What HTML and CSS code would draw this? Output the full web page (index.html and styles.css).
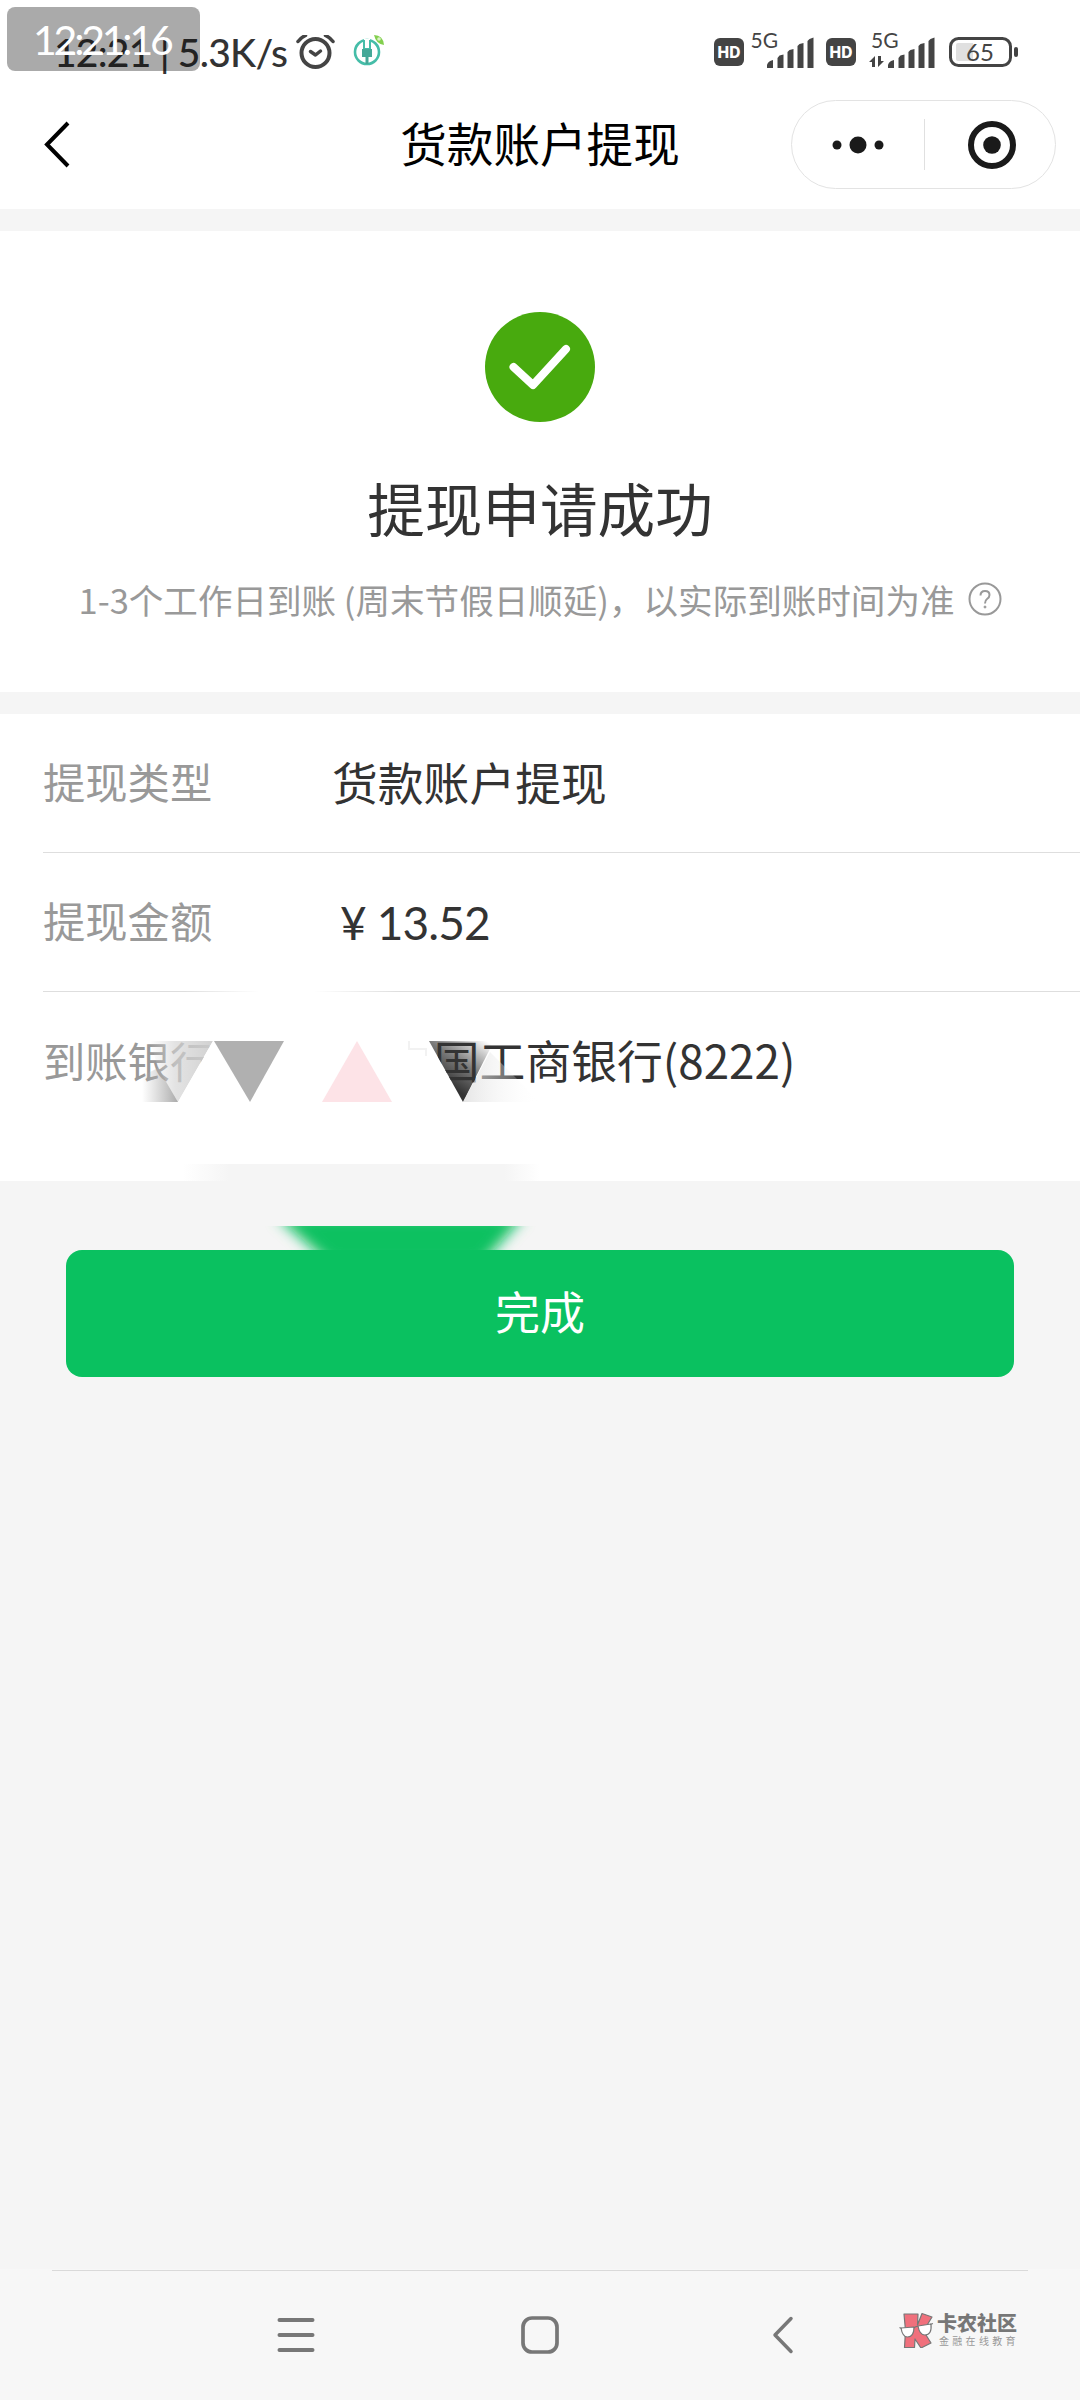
FILE: index.html
```html
<!DOCTYPE html>
<html lang="zh-CN">
<head>
<meta charset="utf-8">
<title>货款账户提现</title>
<link rel="stylesheet" href="styles.css">
</head>
<body>
<div class="screen">
  <header class="top">
    <div class="status">
      <span class="clock">12:21 | 5.3K/s</span>
      <svg class="alarm" width="40" height="36" viewBox="296 35 40 36" fill="none" stroke="#444" stroke-linecap="round">
        <circle cx="315.500" cy="53" r="14" stroke-width="4"/>
        <path d="M298 41.500q3-4 7.500-6M333 41.500q-3-4-7.500-6" stroke-width="3.500"/>
        <path d="M310.500 51.500l5 3.500 5-4" stroke-width="3.500" stroke-linejoin="round"/>
      </svg>
      <svg class="bank" width="34" height="36" viewBox="352 33 34 36">
        <circle cx="367" cy="52" r="12" fill="none" stroke="#45bda8" stroke-width="2.600"/>
        <path d="M364 39h6v8h-6z" fill="#fff"/>
        <path d="M364 40v9h6v-9" stroke="#45bda8" stroke-width="2" fill="none"/>
        <path d="M362 49h10v8h-3.500v7h-3v-7H362z" fill="#45a898"/>
        <path d="M374 35q9 0 10 10-8-1-10-10z" fill="#83cf4e"/>
        <circle cx="379" cy="39" r="1.800" fill="#d8f3c4"/>
      </svg>
      <svg class="signals" width="308" height="40" viewBox="712 31 308 40">
        <g fill="#444">
          <rect x="714" y="38" width="30" height="28" rx="6"/>
          <rect x="826" y="38" width="30" height="28" rx="6"/>
          <path id="bars" d="M767 68v-3q1-4 6-5v8zM777.500 68V58l2-2.500 4-1V68zM787.500 68V52l2-2 4-1V68zM797.500 68V46l2-2 4-1V68zM807.500 68V41l2-2 4-1.500V68z"/>
          <use href="#bars" x="121"/>
          <path d="M869 62l6-6v11h-3v-5zM884 61l-6 6V56h3v5z"/>
          <rect x="1014" y="47" width="4" height="10" rx="2"/>
        </g>
        <rect x="950.500" y="38.500" width="60" height="27" rx="8" fill="none" stroke="#444" stroke-width="3"/>
        <path d="M958 43h15v18h-15q-2 0-2-2V45q0-2 2-2z" fill="#e0e0e0"/>
        <g class="glyphs">
          <text class="hd" x="729" y="58" text-anchor="middle">HD</text>
          <text class="hd" x="841" y="58" text-anchor="middle">HD</text>
          <text class="net" x="750.500" y="48">5G</text>
          <text class="net" x="871" y="48">5G</text>
          <text class="charge" x="980" y="61" text-anchor="middle">65</text>
        </g>
      </svg>
      <span class="stamp">12:21:16</span>
    </div>
    <div class="navbar">
      <svg class="back" width="28" height="50" viewBox="44 120 28 50" fill="none" stroke="#000" stroke-width="4"><path d="M69 123L48 144.500 69 166"/></svg>
      <h1 class="title">货款账户提现</h1>
      <div class="capsule">
        <svg width="52" height="20" viewBox="0 0 52 20" fill="#1a1a1a"><circle cx="5" cy="10" r="4.500"/><circle cx="26" cy="10" r="8.500"/><circle cx="47" cy="10" r="4.500"/></svg>
        <i class="divider"></i>
        <svg width="50" height="50" viewBox="0 0 50 50"><circle cx="25" cy="25" r="21" fill="none" stroke="#1a1a1a" stroke-width="6"/><circle cx="25" cy="25" r="8.800" fill="#1a1a1a"/></svg>
      </div>
    </div>
  </header>

  <section class="result">
    <svg class="tick" width="110" height="110" viewBox="0 0 110 110"><circle cx="55" cy="55" r="55" fill="#48aa0e"/><path d="M28.500 55L48 73 81 37" fill="none" stroke="#fff" stroke-width="8" stroke-linecap="round" stroke-linejoin="round"/></svg>
    <h2 class="headline">提现申请成功</h2>
    <p class="note"><span>1-3个工作日到账 (周末节假日顺延)，以实际到账时间为准</span>
      <svg class="help" width="34" height="34" viewBox="0 0 34 34" fill="none" stroke="#999" stroke-width="2"><circle cx="17" cy="17" r="15.500"/><path d="M12.500 13.500q0-4.500 4.500-4.500t4.500 4q0 2.300-2.500 4-2 1.400-2 4.500"/><circle cx="17" cy="25" r="1" fill="#999" stroke-width="1"/></svg>
    </p>
  </section>

  <section class="details">
    <div class="row"><span class="label">提现类型</span><span class="value">货款账户提现</span></div>
    <div class="row"><span class="label">提现金额</span><span class="value amount"><span class="yen">¥</span>13.52</span></div>
    <div class="row last"><span class="label">到账银行</span><span class="value bankname">中国工商银行(8222)</span></div>

    <svg class="smudge" width="600" height="300" viewBox="0 970 600 300">
      <defs>
        <linearGradient id="fadeLine"><stop offset="0" stop-color="#fff" stop-opacity="0"/><stop offset=".35" stop-color="#fff"/><stop offset=".6" stop-color="#fff"/><stop offset="1" stop-color="#fff" stop-opacity="0"/></linearGradient>
        <linearGradient id="greyL"><stop offset="0" stop-color="#d4d4d4" stop-opacity="0"/><stop offset=".4" stop-color="#d4d4d4" stop-opacity=".65"/><stop offset="1" stop-color="#cdcdcd" stop-opacity=".92"/></linearGradient>
        <linearGradient id="greyB"><stop offset="0" stop-color="#b5b5b5" stop-opacity="0"/><stop offset="1" stop-color="#aaa"/></linearGradient>
        <linearGradient id="dark" gradientUnits="userSpaceOnUse" x1="482" y1="1038" x2="450" y2="1086"><stop offset="0" stop-color="#333" stop-opacity="0"/><stop offset=".55" stop-color="#333" stop-opacity=".65"/><stop offset="1" stop-color="#333"/></linearGradient>
        <linearGradient id="pale"><stop offset="0" stop-color="#ddd" stop-opacity=".75"/><stop offset="1" stop-color="#fff" stop-opacity="0"/></linearGradient>
        <linearGradient id="band"><stop offset="0" stop-color="#f5f5f5" stop-opacity="0"/><stop offset=".13" stop-color="#f5f5f5"/><stop offset=".9" stop-color="#f5f5f5"/><stop offset="1" stop-color="#f5f5f5" stop-opacity="0"/></linearGradient>
        <filter id="soft" x="-20%" y="-50%" width="140%" height="200%"><feGaussianBlur stdDeviation="7"/></filter>
        <clipPath id="strip"><rect x="200" y="1226" width="400" height="24"/></clipPath>
      </defs>
      <rect x="184" y="988" width="216" height="6" fill="url(#fadeLine)"/>
      <path d="M150 1041h63l-35 61-20-34z" fill="url(#greyL)"/>
      <path d="M142 1102h36l-20-34-16 8z" fill="url(#greyB)"/>
      <path d="M170 1030h313v11h-54l34 61v10H178v-10l35-61h-43z" fill="#fff"/>
      <path d="M214 1041h70l-34 61z" fill="#b0b0b0"/>
      <path d="M357 1041l35 61h-70z" fill="#fde3e7"/>
      <path d="M409 1041v9m0-1h17v7" fill="none" stroke="#f2f2f2" stroke-width="2"/>
      <path d="M429 1041h65l-31 61z" fill="url(#dark)"/>
      <path d="M490 1052l50 50h-77z" fill="url(#pale)"/>
      <rect x="183" y="1164" width="357" height="18" fill="url(#band)"/>
      <g clip-path="url(#strip)"><path d="M276 1216H524L482 1264H330z" fill="#0ac160" filter="url(#soft)"/></g>
    </svg>
  </section>

  <main class="actions"><button class="done">完成</button></main>

  <footer class="sysnav">
    <svg width="38" height="36" viewBox="0 0 38 36" stroke="#777" stroke-width="4" stroke-linecap="round"><path d="M2.500 3h33M2.500 18h33M2.500 33h33"/></svg>
    <svg width="38" height="38" viewBox="0 0 38 38" fill="none" stroke="#777" stroke-width="3.700"><rect x="2" y="2" width="34" height="34" rx="9"/></svg>
    <svg width="24" height="38" viewBox="0 0 24 38" fill="none" stroke="#777" stroke-width="3.500" stroke-linecap="round" stroke-linejoin="round"><path d="M20 2.500L4 19l16 16.500"/></svg>
    <div class="brand">
      <svg width="36" height="36" viewBox="900 2312 36 36" stroke="#777" stroke-width="1.200" stroke-linejoin="round">
        <path d="M905 2314h14l-.5 11 4.500-11.500 10 3.500-8.500 14 7.500 12-10 5-6-9-.5 8.500h-10l1-17z" fill="#f0707c"/>
        <path d="M902 2328l13-1q0 10-6.500 10-5 0-6.500-9zM919 2326l13-2q1 11-6 11-5.500 0-7-9z" fill="#fff"/>
        <path d="M900.500 2327.500l2 1M915 2328q2-2 4-1.500M931 2324.500l3-1" fill="none"/>
      </svg>
      <div class="words"><strong>卡农社区</strong><small>金融在线教育</small></div>
    </div>
  </footer>
</div>
</body>
</html>
```
FILE: styles.css
```css
* { box-sizing: border-box; margin: 0; padding: 0; }
body { background: #f5f5f5; font-family: "Noto Sans CJK SC", sans-serif; color: #333; }
svg { display: block; flex: none; }
.screen { width: 1080px; height: 2400px; display: flex; flex-direction: column; overflow: hidden; }

.top { height: 209px; background: #fff; }
.status { position: relative; height: 100px; display: flex; align-items: flex-start; padding-left: 54px; }
.clock { width: 242px; padding-top: 28px; font: 500 39px/48px Lato, sans-serif; letter-spacing: -.75px; color: #333; white-space: nowrap; }
.alarm { margin-top: 35px; }
.bank { margin: 33px 0 0 16px; }
.signals { margin: 31px 60px 0 auto; }
.glyphs { font-family: Lato, sans-serif; fill: #444; }
.hd { font: 800 15.5px Inter, sans-serif; fill: #fff; }
.net { font-size: 21px; }
.charge { font-size: 24px; }
.stamp { position: absolute; left: 7px; top: 7px; width: 193px; height: 64px; padding-left: 26px; border-radius: 8px; background: rgba(0, 0, 0, .335); color: #fff; font: 41px/66px Lato, sans-serif; letter-spacing: -3.2px; white-space: nowrap; }

.navbar { height: 89px; display: grid; grid-template-columns: 289px 1fr 289px; align-items: center; }
.back { margin-left: 43px; }
.title { text-align: center; font-size: 46.6px; line-height: 84px; padding-bottom: 5px; font-weight: 400; color: #000; }
.capsule { width: 265px; height: 89px; border: 1px solid #e3e3e3; border-radius: 45px; display: flex; align-items: center; padding-left: 40px; }
.divider { width: 1px; height: 51px; margin: 0 42px 0 40px; background: #e0e0e0; }

.result { height: 461px; margin-top: 22px; background: #fff; display: flex; flex-direction: column; align-items: center; padding-top: 81px; }
.headline { margin-top: 43px; font-size: 57.6px; line-height: 84px; font-weight: 400; }
.note { display: flex; align-items: center; gap: 13px; margin-top: 24px; font-size: 34.55px; line-height: 52px; color: #999; white-space: nowrap; }

.details { position: relative; height: 467px; margin-top: 22px; background: #fff; padding-left: 43px; }
.row { height: 139px; display: flex; align-items: center; border-bottom: 1px solid #dedede; }
.row.last { border-bottom: 0; }
.label { width: 289px; padding-bottom: 5px; font-size: 42.3px; color: #999; }
.value { padding-bottom: 5px; font-size: 45.8px; white-space: nowrap; }
.amount { font-family: Lato, sans-serif; font-size: 46px; padding: 0 0 0 8px; letter-spacing: -.9px; }
.yen { margin-right: 11px; }
.bankname { padding-left: 56px; }
.smudge { position: absolute; left: 0; top: 256px; }

.actions { flex: 1; padding: 69px 66px 0; }
.done { display: block; width: 948px; height: 127px; padding-bottom: 5px; border: 0; border-radius: 16px; background: #0ac160; color: #fff; font: 45px/122px "Noto Sans CJK SC", sans-serif; }

.sysnav { height: 131px; background: #f7f7f7; display: flex; align-items: center; padding-left: 277px; gap: 206px; position: relative; }
.sysnav::before { content: ""; position: absolute; top: 1px; left: 52px; right: 52px; height: 1px; background: #dadada; }
.sysnav > svg:nth-child(3) { margin-left: 6px; }
.brand { display: flex; gap: 2px; margin: -10px 0 0 -102px; align-items: center; }
.words { display: flex; flex-direction: column; color: #777; }
.words strong { font-size: 20px; line-height: 22px; font-weight: 900; }
.words small { font-size: 10px; line-height: 14px; letter-spacing: 3.3px; padding-left: 2px; color: #999; white-space: nowrap; }
```
